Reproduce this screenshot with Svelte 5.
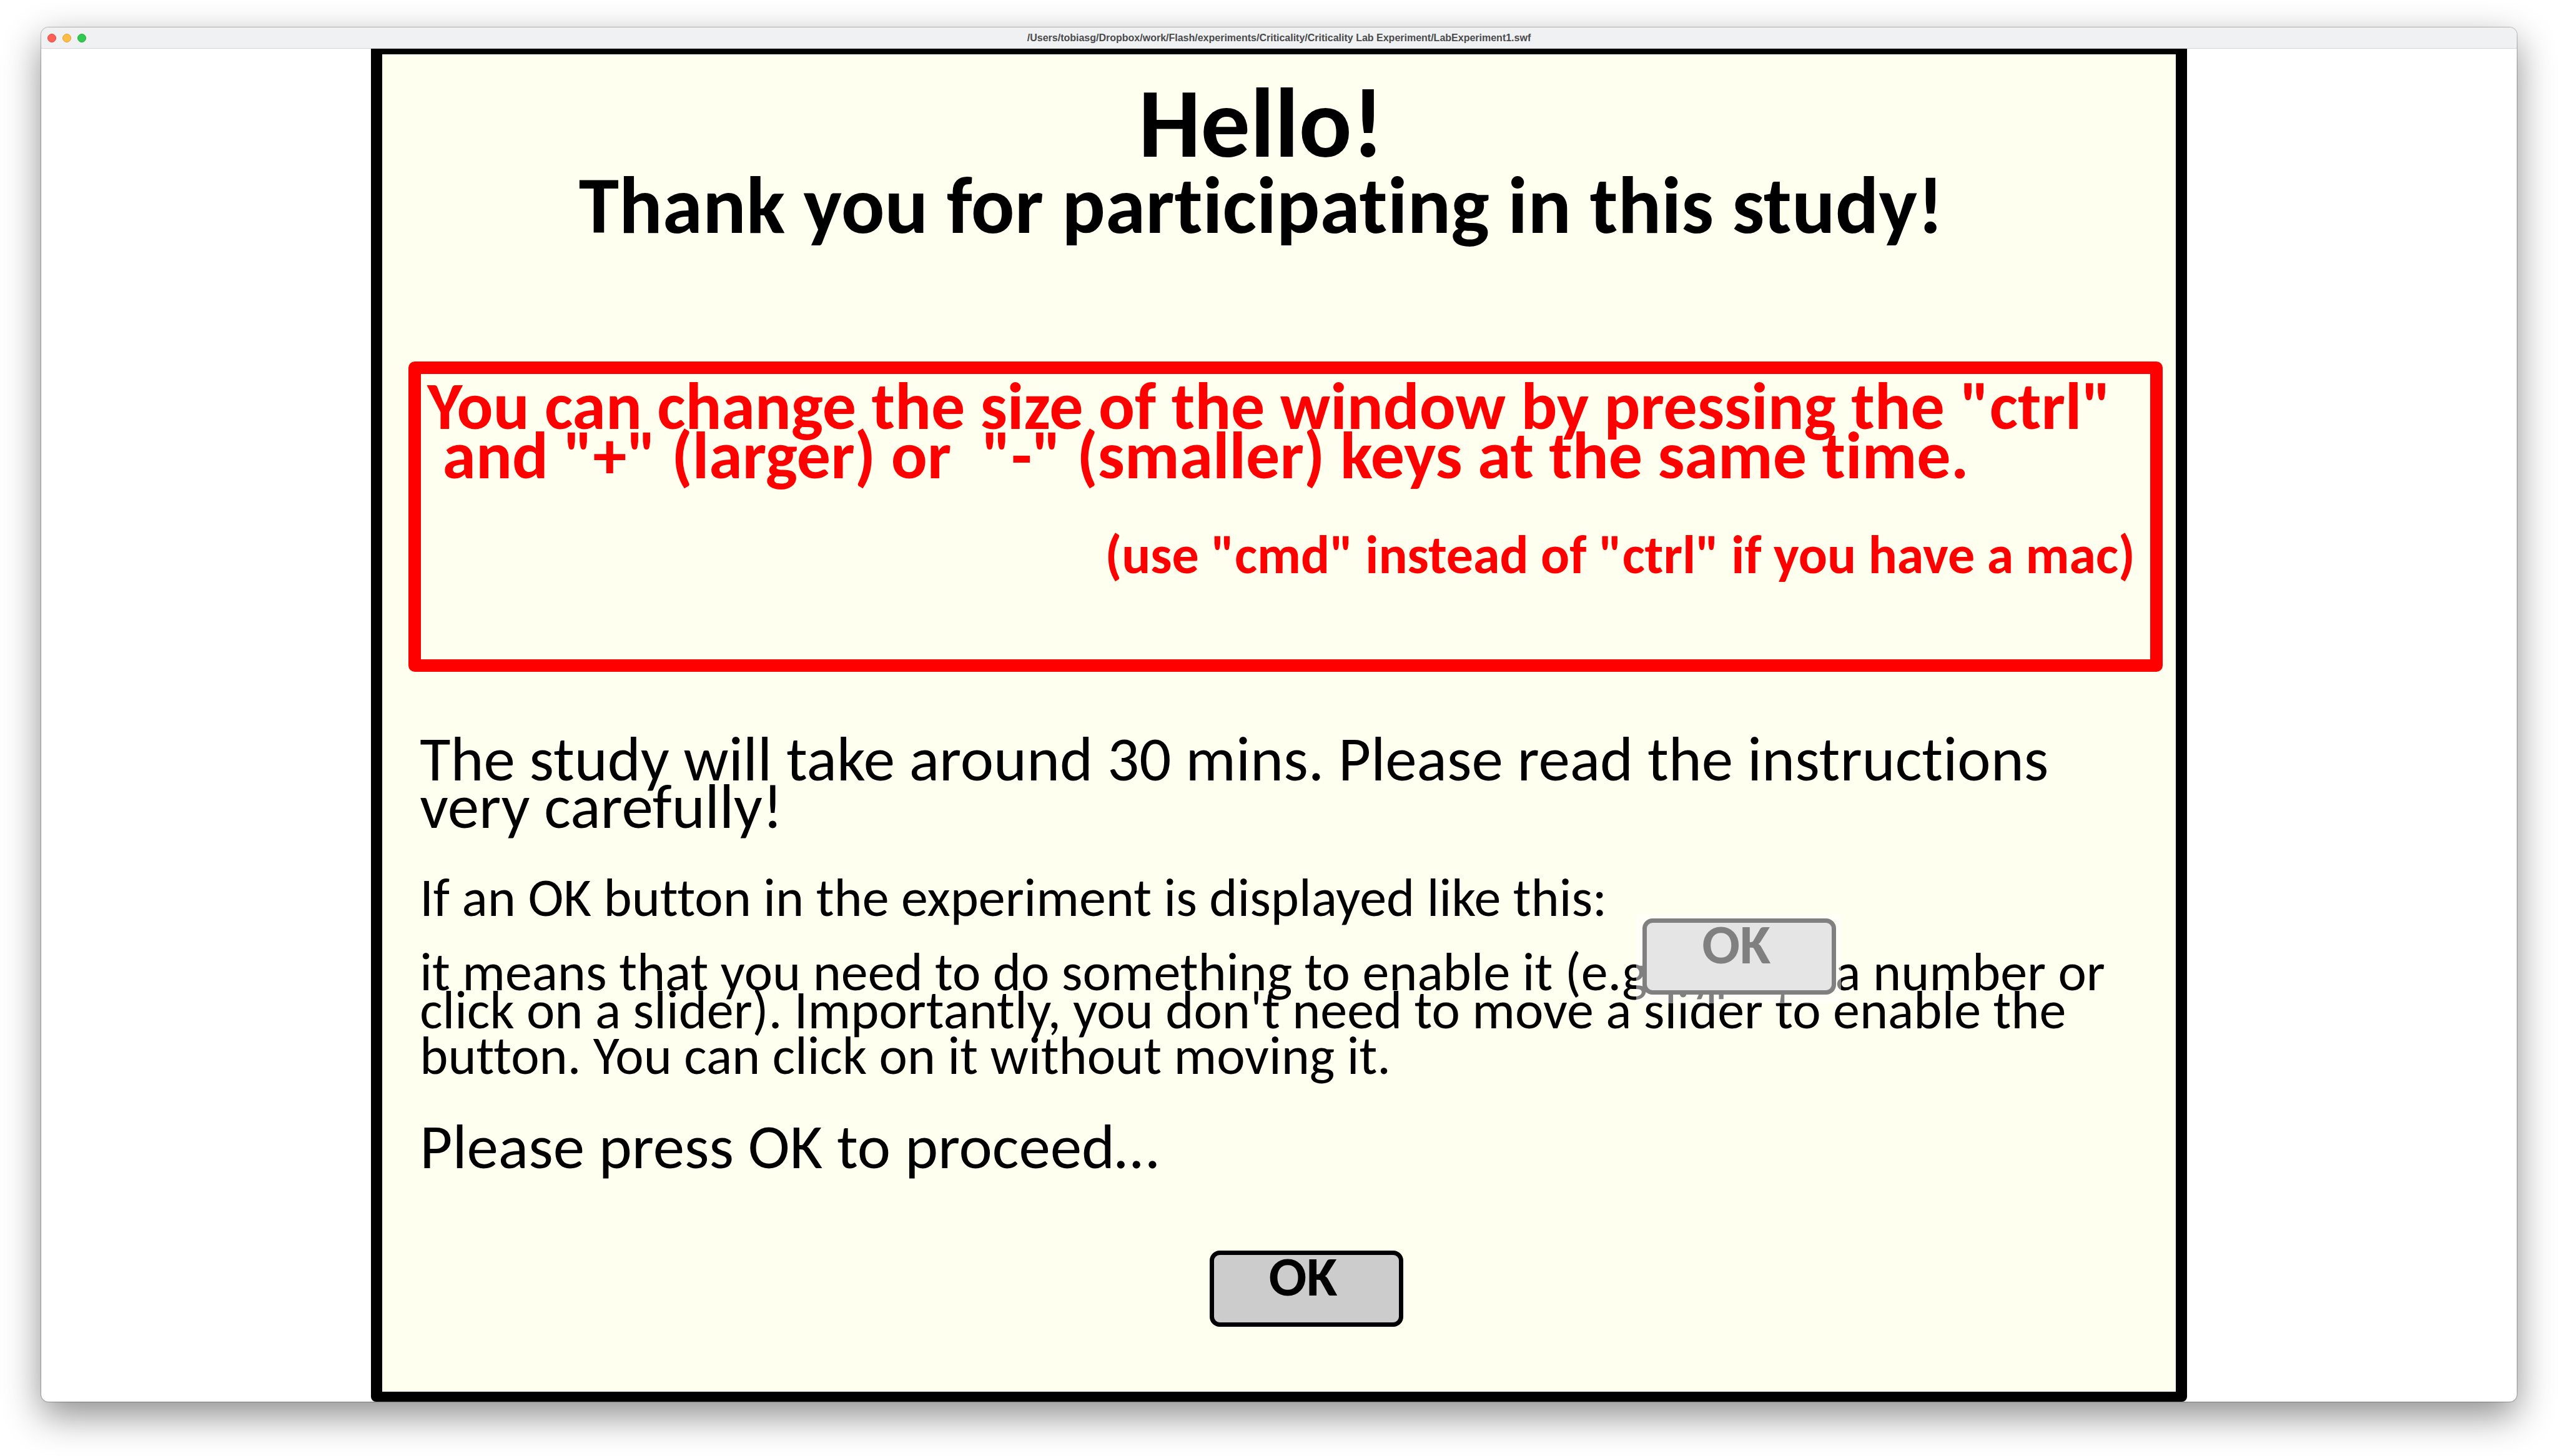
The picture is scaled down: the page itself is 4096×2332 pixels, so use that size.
<script>
  const filePath =
    '/Users/tobiasg/Dropbox/work/Flash/experiments/Criticality/Criticality Lab Experiment/LabExperiment1.swf';
  const windowButtons = ['close', 'minimize', 'zoom'];

  let started = $state(false);
</script>

<div class="desktop">
  <div class="window">
    <header class="titlebar">
      <div class="lights">
        {#each windowButtons as name}
          <button class="light {name}" type="button" aria-label={name}></button>
        {/each}
      </div>
      <span class="path">{filePath}</span>
    </header>

    <div class="stage">
      <main class="panel">
        <div class="heading">
          <h1>Hello!</h1>
          <h2>Thank you for participating in this study!</h2>
        </div>

        <section class="notice">
          <p class="keys">You can change the size of the window by pressing the "ctrl"<br />{' and "+" (larger) or  "-" (smaller) keys at the same time.'}</p>
          <p class="mac">(use "cmd" instead of "ctrl" if you have a mac)</p>
        </section>

        <section class="body">
          <p class="large">The study will take around 30 mins. Please read the instructions<br />very carefully!</p>
          <p class="intro">If an OK button in the experiment is displayed like this:</p>
          <div class="explain">
            <p>it means that you need to do something to enable it (e.g. type in a number or<br />click on a slider). Importantly, you don't need to move a slider to enable the</p>
            <p class="last">button. You can click on it without moving it.</p>
            <div class="sample">
              <button class="ok" type="button" disabled>OK</button>
            </div>
          </div>
          <p class="large">Please press OK to proceed…</p>
        </section>

        <div class="actions">
          <button class="ok" type="button" onclick={() => (started = true)}>OK</button>
        </div>
      </main>
    </div>
  </div>
</div>

<style>
  :global(body) {
    margin: 0;
    background: #ffffff;
  }

  h1,
  h2,
  p {
    margin: 0;
    white-space: pre;
  }

  .desktop {
    box-sizing: border-box;
    min-height: 100vh;
    padding: 44px 66px 87px;
    display: flex;
  }

  .window {
    flex: 1;
    display: flex;
    flex-direction: column;
    overflow: hidden;
    border-radius: 12px;
    background: #ffffff;
    box-shadow:
      0 0 1px 1px rgba(0, 0, 0, 0.25),
      0 22px 60px rgba(0, 0, 0, 0.45);
  }

  .titlebar {
    box-sizing: border-box;
    height: 34px;
    display: grid;
    grid-template-columns: 1fr auto 1fr;
    align-items: center;
    padding: 0 10px;
    border-bottom: 1px solid #d6d7d9;
    background: #f0f1f3;
  }

  .lights {
    display: flex;
    gap: 10px;
  }

  .light {
    box-sizing: border-box;
    width: 14px;
    height: 14px;
    padding: 0;
    border: 1px solid;
    border-radius: 50%;
  }

  .close {
    background: #ff5f57;
    border-color: #e2463f;
  }

  .minimize {
    background: #febc44;
    border-color: #dfa035;
  }

  .zoom {
    background: #30c951;
    border-color: #27aa35;
  }

  .path {
    font: bold 16px/32px 'Liberation Sans', Arial, sans-serif;
    color: #4a4a4b;
    white-space: nowrap;
  }

  .stage {
    flex: 1;
    display: flex;
    justify-content: center;
  }

  .panel {
    box-sizing: border-box;
    width: 73.35%;
    display: flex;
    flex-direction: column;
    padding: 34px 21px 0 42px;
    border: solid #000000;
    border-width: 9px 18px 16px;
    border-radius: 0 0 8px 8px;
    background: #ffffef;
    color: #000000;
    font-family: Carlito, Calibri, Lato, sans-serif;
    font-variant-ligatures: none;
  }

  .heading {
    padding-right: 78px;
    text-align: center;
  }

  h1 {
    font-size: 158px;
    line-height: 152px;
  }

  h2 {
    font-size: 130px;
    line-height: 112px;
  }

  .notice {
    margin-top: 194px;
    padding: 12px 24px 127px 10px;
    border: 20px solid #ff0000;
    border-radius: 10px;
    color: #ff0000;
    font-weight: bold;
  }

  .keys {
    font-size: 108px;
    line-height: 79px;
  }

  .mac {
    margin-top: 80px;
    font-size: 86px;
    line-height: 80px;
    text-align: right;
  }

  .body {
    margin-top: 102px;
    padding-left: 18px;
  }

  .large {
    font-size: 101px;
    line-height: 76px;
  }

  .intro {
    margin-top: 72px;
    font-size: 86px;
    line-height: 72px;
  }

  .explain {
    position: relative;
    margin: 52px 0 78px;
    font-size: 86px;
    line-height: 61px;
  }

  .last {
    margin-top: 12px;
  }

  .sample {
    position: absolute;
    top: -62px;
    left: 1948px;
    padding: 7px 8px 14px 10px;
    background: rgba(255, 255, 255, 0.5);
    line-height: 0;
  }

  .actions {
    display: flex;
    justify-content: center;
    margin-top: 128px;
    padding-left: 66px;
  }

  .ok {
    box-sizing: border-box;
    width: 310px;
    height: 122px;
    padding: 0 10px 40px 0;
    border: 7px solid #000000;
    border-radius: 16px;
    background: #cccccc;
    color: #000000;
    font: bold 90px/66px Carlito, Calibri, Lato, sans-serif;
    text-align: center;
  }

  .ok:disabled {
    border-color: #808080;
    background: #e5e5e5;
    color: #808080;
  }
</style>
